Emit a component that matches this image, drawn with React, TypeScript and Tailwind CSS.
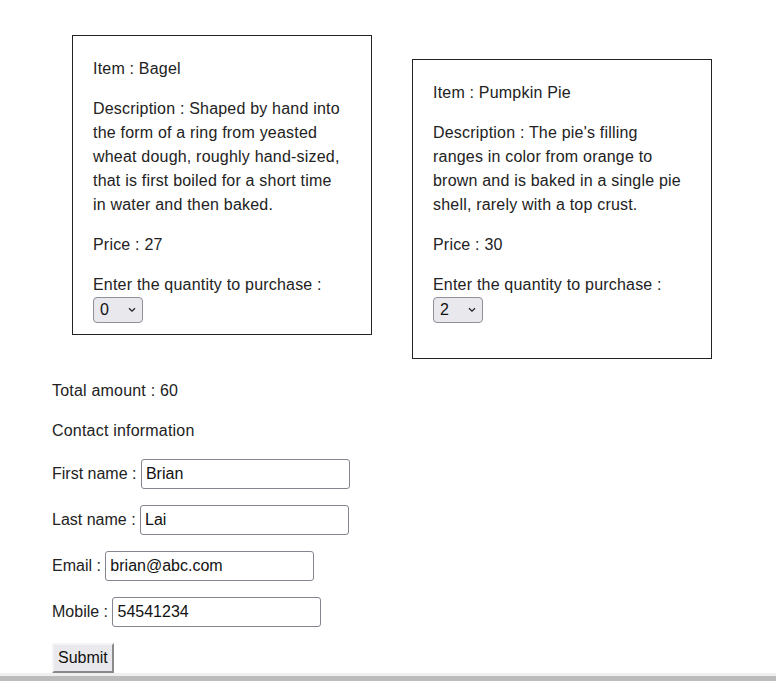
import { useState } from "react";

type Item = {
  name: string;
  lines: string[];
  price: number;
};

// description lines kept as they wrap in the design
const ITEMS: Item[] = [
  {
    name: "Bagel",
    lines: [
      "Description : Shaped by hand into",
      "the form of a ring from yeasted",
      "wheat dough, roughly hand-sized,",
      "that is first boiled for a short time",
      "in water and then baked.",
    ],
    price: 27,
  },
  {
    name: "Pumpkin Pie",
    lines: [
      "Description : The pie's filling",
      "ranges in color from orange to",
      "brown and is baked in a single pie",
      "shell, rarely with a top crust.",
    ],
    price: 30,
  },
];

function QtySelect({ value, onChange }: { value: number; onChange: (v: number) => void }) {
  return (
    <div className="relative inline-block">
      <select
        value={value}
        onChange={(e) => onChange(Number(e.target.value))}
        className="block h-[26px] w-[50px] appearance-none rounded-[4px] border border-[#8f8f9d] bg-[#e9e9ed] pl-[6px] text-[16px] leading-[24px] text-[#111]"
      >
        {[0, 1, 2, 3, 4, 5].map((n) => (
          <option key={n} value={n}>
            {n}
          </option>
        ))}
      </select>
      <svg
        className="pointer-events-none absolute right-[7px] top-[10px]"
        width="8"
        height="6"
        viewBox="0 0 8 6"
        fill="none"
      >
        <path d="M1 1.2 L4 4.2 L7 1.2" stroke="#222" strokeWidth="1.3" />
      </svg>
    </div>
  );
}

function ItemCard({
  item,
  qty,
  onQty,
  className,
}: {
  item: Item;
  qty: number;
  onQty: (v: number) => void;
  className?: string;
}) {
  return (
    <div
      className={
        "m-5 box-border h-[300px] w-[300px] shrink-0 border border-[#222] px-5 pb-5 pt-[21px] " +
        (className ?? "")
      }
    >
      <p>Item : {item.name}</p>
      <p className="mt-4 whitespace-nowrap">
        {item.lines.map((l, i) => (
          <span key={i}>
            {l}
            {i < item.lines.length - 1 && <br />}
          </span>
        ))}
      </p>
      <p className="mt-4">Price : {item.price}</p>
      <p className="mt-4">Enter the quantity to purchase :</p>
      <QtySelect value={qty} onChange={onQty} />
    </div>
  );
}

function Field({ label, value }: { label: string; value: string }) {
  return (
    <div className="mt-4 flex items-center tracking-normal">
      <span>{label} :&nbsp;</span>
      <input
        defaultValue={value}
        className="box-border h-[30px] w-[209px] rounded-[3px] border border-[#858590] px-[4px] text-[16px] text-[#111] outline-none"
      />
    </div>
  );
}

export default function App() {
  const [qty, setQty] = useState<number[]>([0, 2]);
  const total = ITEMS.reduce((sum, it, i) => sum + it.price * qty[i], 0);

  return (
    <div className="flex min-h-[681px] flex-col bg-white text-[16px] leading-[24px] tracking-[0.2px] text-[#222] [font-family:'Liberation_Sans',Arial,sans-serif]">
      <div className="flex-1 pl-[52px] pt-[15px]">
        <div className="flex items-start">
          {ITEMS.map((it, i) => (
            <ItemCard
              key={it.name}
              item={it}
              qty={qty[i]}
              onQty={(v) => setQty((q) => q.map((x, j) => (j === i ? v : x)))}
              className={i === 1 ? "mt-[44px]" : ""}
            />
          ))}
        </div>
        <p>Total amount : {total}</p>
        <p className="mt-4">Contact information</p>
        <Field label="First name" value="Brian" />
        <Field label="Last name" value="Lai" />
        <Field label="Email" value="brian@abc.com" />
        <Field label="Mobile" value="54541234" />
        <button className="mt-4 box-border h-[30px] border-2 border-b-[#8a8a8a] border-l-[#f4f4f4] border-r-[#8a8a8a] border-t-[#f4f4f4] bg-[#e9e9ed] px-[4px] text-[16px] tracking-normal text-[#111]">
          Submit
        </button>
      </div>
      <div className="h-[3px] bg-[#efefef]" />
      <div className="h-[5px] bg-[#bcbcbc]" />
    </div>
  );
}
